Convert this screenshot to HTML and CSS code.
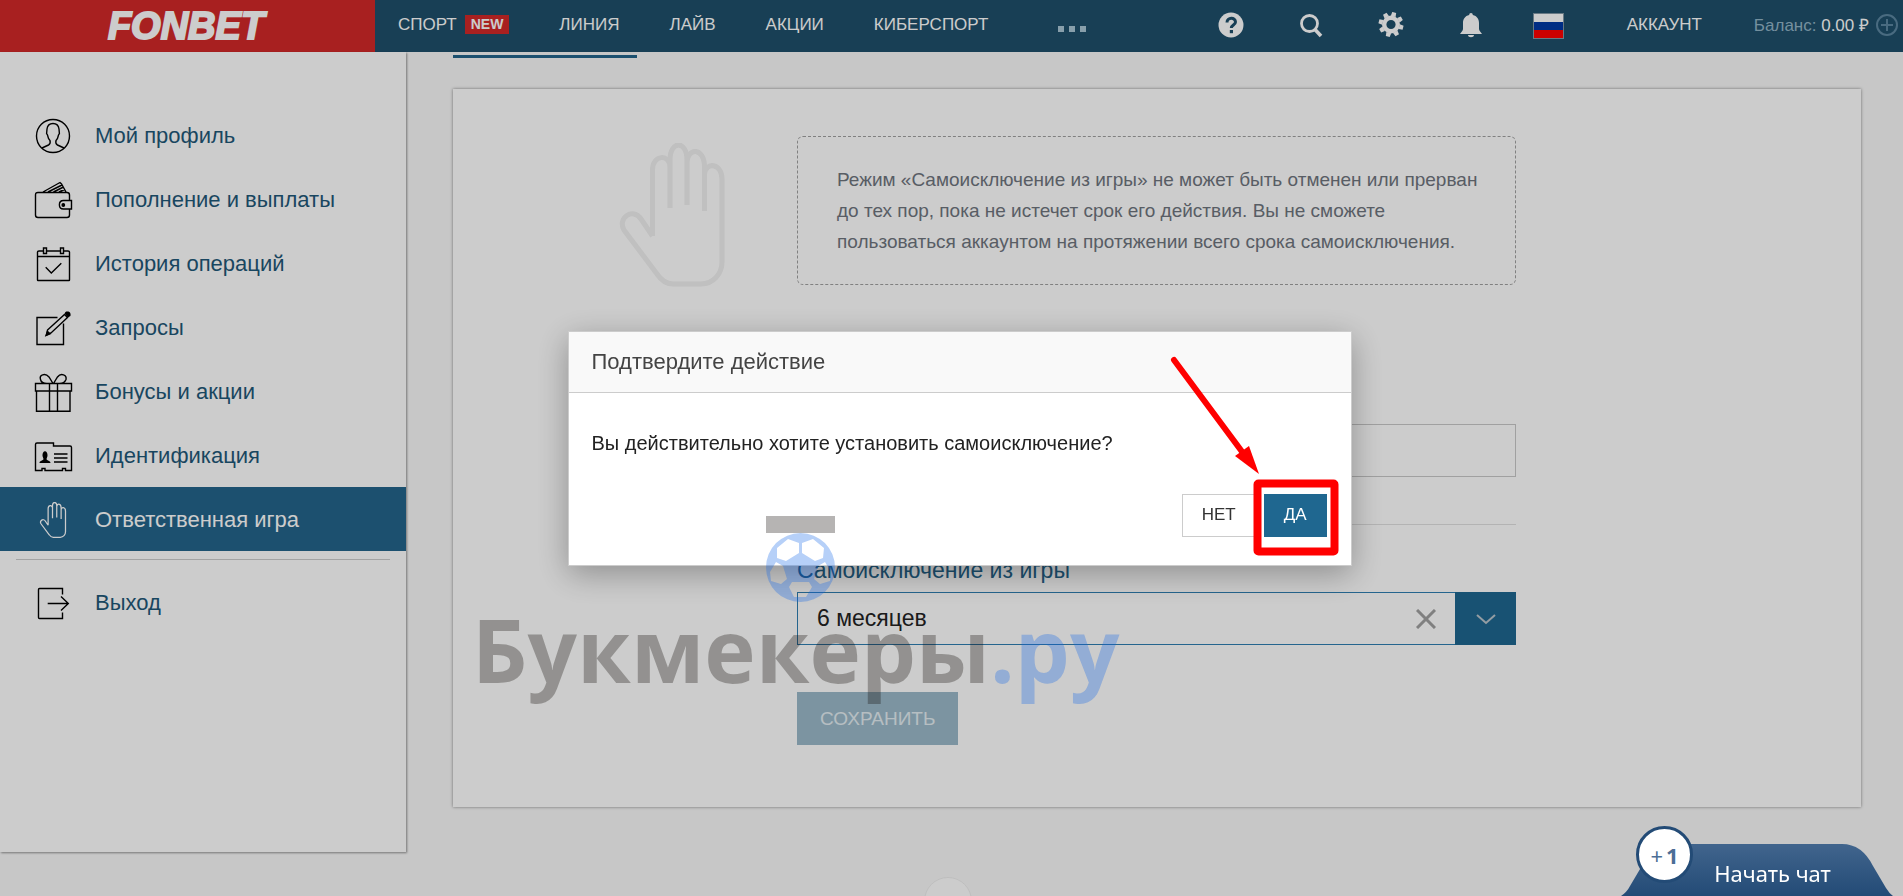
FILE: index.html
```html
<!DOCTYPE html>
<html lang="ru">
<head>
<meta charset="utf-8">
<title>Fonbet — Ответственная игра</title>
<link rel="stylesheet" href="styles.css">
</head>
<body>
<svg class="defs" aria-hidden="true">
  <symbol id="hand" viewBox="0 0 106 144">
    <path d="M33.500 93V27C33.500 11 51 11 51 24V65V17C51-3 68-3 68 17V62V20C68 4 85.500 4 85.500 24V68V32C86 18 103 20 103 36V119C103 131 94 141 82 141H54C47 141 42 137 38 131L5 87C-2 75 14 64 22 76L33.500 93"/>
  </symbol>
</svg>

<header class="topbar">
  <a class="logo" href="#">FONBET</a>
  <nav class="nav">
    <a href="#">СПОРТ<span class="new">NEW</span></a>
    <a href="#">ЛИНИЯ</a>
    <a href="#">ЛАЙВ</a>
    <a href="#">АКЦИИ</a>
    <a href="#">КИБЕРСПОРТ</a>
    <button class="more" aria-label="Ещё"><i></i><i></i><i></i></button>
  </nav>
  <div class="tools">
    <button class="tool" aria-label="Помощь"><svg viewBox="0 0 26 26"><circle cx="13" cy="13" r="12.500" fill="#fff"/><path d="M9 10.500C9 5 17.500 5 17.500 10C17.500 13 13.300 13 13.300 16" fill="none" stroke="#1e4f6b" stroke-width="3"/><rect x="11.800" y="18" width="3.200" height="3.200" fill="#1e4f6b"/></svg></button>
    <button class="tool" aria-label="Поиск"><svg viewBox="0 0 26 26"><circle cx="11.500" cy="11.500" r="8" fill="none" stroke="#fff" stroke-width="2.800"/><path d="M17 17.500L23 24" stroke="#fff" stroke-width="3.600"/></svg></button>
    <button class="tool" aria-label="Настройки"><svg viewBox="0 0 26 26"><circle cx="13" cy="12.500" r="6.800" fill="none" stroke="#fff" stroke-width="4.400"/><g fill="#fff" transform="rotate(15 13 12.500)"><path id="tooth" d="M10.500 4L11 0H15L15.500 4Z"/><use href="#tooth" transform="rotate(45 13 12.500)"/><use href="#tooth" transform="rotate(90 13 12.500)"/><use href="#tooth" transform="rotate(135 13 12.500)"/><use href="#tooth" transform="rotate(180 13 12.500)"/><use href="#tooth" transform="rotate(225 13 12.500)"/><use href="#tooth" transform="rotate(270 13 12.500)"/><use href="#tooth" transform="rotate(315 13 12.500)"/></g></svg></button>
    <button class="tool" aria-label="Уведомления"><svg viewBox="0 0 26 26"><path d="M13 1C14.200 1 14.800 1.800 14.800 3C19 4 21 7 21 11V17C21 19 23 20 24 22H2C3 20 5 19 5 17V11C5 7 7 4 11.200 3C11.200 1.800 11.800 1 13 1ZM10 23H16C16 26 10 26 10 23Z" fill="#fff"/></svg></button>
    <button class="tool language" aria-label="Язык: русский"><span class="flag"><i></i><i></i><i></i></span></button>
    <a class="account" href="#">АККАУНТ</a>
    <a class="balance" href="#"><span>Баланс: <b>0.00 ₽</b></span><svg viewBox="0 0 22 22"><circle cx="11" cy="11" r="10"/><path d="M5 11H17M11 5V17"/></svg></a>
  </div>
</header>

<div class="page">
  <aside class="sidebar">
    <a class="item" href="#"><svg class="icon" viewBox="0 0 40 40"><circle cx="20" cy="20" r="16.500"/><path d="M9 32L15.500 29C17.500 28 17.500 26.500 17 24.500L15.500 22.500L14.500 19L13.600 17.500L14 13C14.500 9 17 7.500 20 7.500S25.500 9 26 13L26.400 17.500L25.500 19L24.500 22.500L23 24.500C22.500 26.500 22.500 28 24.500 29L31 32"/></svg>Мой профиль</a>
    <a class="item" href="#"><svg class="icon" viewBox="0 0 40 40"><path d="M36.500 20.500V15Q36.500 12.500 34 12.500H5Q2.500 12.500 2.500 15V35Q2.500 37.500 5 37.500H34Q36.500 37.500 36.500 35V29M38.500 20.500V29H30.500C25 29 25 20.500 30.500 20.500ZM10 12L27 2.500L28.500 4L33 12M15 12L29 5M20.500 12L30.500 7M26 12L31.500 9.500"/><circle cx="30.300" cy="25" r="1.200" fill="#000"/></svg>Пополнение и выплаты</a>
    <a class="item" href="#"><svg class="icon" viewBox="0 0 40 40"><path d="M10.500 7H6Q4.500 7 4.500 8V36Q4.500 36.500 5 36.500H36Q36.500 36.500 36.500 36V8Q36.500 7 35 7H30.500M13.500 7H27.500M4.500 12.500H36.500M10.500 4H13.500V9.500H10.500ZM27.500 4H30.500V9.500H27.500ZM12.700 23.300L18.300 29L28.300 19.300"/></svg>История операций</a>
    <a class="item" href="#"><svg class="icon" viewBox="0 0 40 40"><path d="M24.500 9.500H4V36.500H30.500V15.500M14.500 22L31.500 6.500L34.500 9.500L18 25L13.500 27Z"/><path d="M13 27.500L14.500 23.500L17 25.800ZM32.500 5.500C33 3 37.500 4 36.800 7.500L35 8.500Z" fill="#000"/></svg>Запросы</a>
    <a class="item" href="#"><svg class="icon" viewBox="0 0 40 40"><path d="M2.500 11.500H38.500V19H2.500ZM3.500 19V39.300H37V19M16.500 11.500V39.300M24.500 11.500V39.300M20 11.500L16 5C12 .5 6 3 7.500 7.500C8 10 11 11.500 14 11.500M20.500 11.500L24.500 5C28 .5 34 3 33 7.500C32 10 30 11.500 26.500 11.500"/></svg>Бонусы и акции</a>
    <a class="item" href="#"><svg class="icon" viewBox="0 0 40 40"><path d="M4 7H20.500V10H37Q38.500 10 38.500 11.500V34.500H32.500V32.500H29.500V34.500H12V32.500H9V34.500H2.500V8.500Q2.500 7 4 7ZM21 18H34.500M21 22H34.500M21 26H34.500"/><path d="M6.500 27C6.500 24.500 10 25 10.500 23L9.500 20C9 13.500 15 13.500 14.500 20L13.500 23C14 25 17.500 24.500 17.500 27Z" fill="#000" stroke="none"/></svg>Идентификация</a>
    <a class="item active" href="#"><svg class="icon hand"><use href="#hand"/></svg>Ответственная игра</a>
    <hr class="rule">
    <a class="item" href="#"><svg class="icon" viewBox="0 0 40 40"><path d="M29.500 11.500V5.500H6.500Q5.500 5.500 5.500 6.500V34.500Q5.500 35.500 6.500 35.500H29.500V29.500M14.700 20.500H35.500M28 13.500L35.300 20.500L28 27.500"/></svg>Выход</a>
  </aside>

  <main class="main">
    <div class="tab"></div>
    <section class="card">
      <svg class="bighand"><use href="#hand"/></svg>
      <form class="form">
        <p class="notice">Режим «Самоисключение из игры» не может быть отменен или прерван до тех пор, пока не истечет срок его действия. Вы не сможете пользоваться аккаунтом на протяжении всего срока самоисключения.</p>
        <input class="text" type="text" aria-label="Ограничение">
        <hr class="split">
        <label class="label" for="period">Самоисключение из игры</label>
        <div class="combo">
          <input id="period" type="text" value="6 месяцев">
          <button class="clear" type="button" aria-label="Очистить"><svg viewBox="0 0 20 20"><path d="M1 1L19 19M19 1L1 19"/></svg></button>
          <button class="open" type="button" aria-label="Открыть список"><svg viewBox="0 0 20 12"><path d="M1 2L10 10L19 2"/></svg></button>
        </div>
        <button class="save" type="button">СОХРАНИТЬ</button>
      </form>
    </section>
  </main>
</div>
<button class="totop" aria-label="Наверх"></button>

<div class="overlay">
  <div class="modal" role="dialog" aria-labelledby="dlg-title">
    <h2 class="modal-title" id="dlg-title">Подтвердите действие</h2>
    <p class="modal-text">Вы действительно хотите установить самоисключение?</p>
    <div class="actions">
      <button class="btn">НЕТ</button>
      <button class="btn primary">ДА</button>
    </div>
    <svg class="pointer" viewBox="0 0 180 210" aria-hidden="true">
      <path d="M11 11L80 104" stroke="#f00" stroke-width="6" stroke-linecap="round"/>
      <path d="M96 125L72 107L86 97Z" fill="#f00"/>
      <rect x="94.500" y="134.500" width="77" height="68" rx="1" fill="none" stroke="#f00" stroke-width="8" stroke-linejoin="round"/>
    </svg>
  </div>
</div>

<div class="watermark" aria-hidden="true">
  <svg class="ball" viewBox="0 0 70 105">
    <rect width="69" height="17" fill="#140f0a"/>
    <path fill="#1467e8" fill-rule="evenodd" d="M0 51.500A34.500 34.500 0 1 1 69 51.500A34.500 34.500 0 1 1 0 51.500ZM11 32L22 23L33 27V37L20 45L11 42ZM36 27L47 23L58 32L57 42L49 45L36 37ZM10 46L17 50L21 63L15 68L5 65L4 56ZM59 46L65 56L64 65L54 68L48 63L52 50ZM26 66H43L46 71L40 81L28 81L23 71Z"/>
  </svg>
  <p class="wordmark">Букмекеры<span>.ру</span></p>
</div>

<button class="chat">
  <svg viewBox="0 0 272 52" preserveAspectRatio="none" aria-hidden="true"><defs><linearGradient id="g" x2="0" y2="1"><stop stop-color="#41658d"/><stop offset="1" stop-color="#234b76"/></linearGradient></defs><path d="M0 52Q6 48 9 42L22 20Q34 0 55 0H221Q241 0 252 22L265 44Q268 49 272 52Z" fill="url(#g)"/></svg>
  <span class="chat-label">Начать чат</span>
  <span class="count">+<b>1</b></span>
</button>
</body>
</html>
```
FILE: styles.css
```css
* { box-sizing: border-box; }
body {
  margin: 0;
  min-height: 100vh;
  overflow: hidden;
  background: #f9f9f9;
  font-family: "Liberation Sans", Arial, sans-serif;
  color: #222;
}
a { color: inherit; text-decoration: none; }
button { font: inherit; border: 0; padding: 0; background: none; cursor: pointer; }
.defs { position: absolute; width: 0; height: 0; }

.topbar { display: flex; height: 52px; background: #1e4f6b; color: #fff; font-size: 17px; }
.logo {
  width: 375px;
  flex: none;
  padding-right: 3px;
  background: #d32929;
  display: flex;
  align-items: center;
  justify-content: center;
  font-size: 38px;
  font-weight: bold;
  font-style: italic;
  -webkit-text-stroke: 2px #fff;
}
.nav { display: flex; align-items: center; gap: 50px; padding: 0 0 3px 23px; }
.nav a { display: flex; align-items: center; gap: 8px; }
.new { background: #d32929; font-size: 14px; font-weight: bold; line-height: 19px; padding: 0 6px; }
.more { display: flex; gap: 5px; margin: 8px 0 0 20px; }
.more i { width: 6px; height: 6px; background: #abc7d6; }
.tools { display: flex; align-items: center; margin-left: auto; padding: 0 5px 3px 0; }
.tool { width: 80px; height: 30px; display: flex; align-items: center; justify-content: center; }
.tool svg { width: 26px; height: 26px; }
.language { padding-right: 5px; }
.flag { display: block; border: 1px solid #8298a6; margin-top: 2px; }
.flag i { display: block; width: 29px; height: 8px; background: #fff; }
.flag i:nth-child(2) { background: #0039a6; }
.flag i:nth-child(3) { background: #f00; }
.account { margin: 0 52px 0 36px; }
.balance { display: flex; align-items: center; gap: 7px; color: #92b4c6; white-space: nowrap; }
.balance b { font-weight: normal; color: #fff; }
.balance svg { width: 22px; height: 22px; fill: none; stroke: #5c86a0; stroke-width: 2; }

.page { display: flex; align-items: flex-start; }
.sidebar {
  width: 406px;
  flex: none;
  padding: 51px 0 218px;
  background: #fff;
  box-shadow: 1px 1px 2px rgba(0, 0, 0, .4);
}
.item { display: flex; align-items: center; height: 64px; padding: 2px 0 0 33px; gap: 22px; font-size: 22px; color: #1f5878; }
.icon { width: 40px; height: 40px; fill: none; stroke: #000; stroke-width: 1.400; }
.icon.hand { height: 36px; stroke: #fff; stroke-width: 5; }
.active { background: #24648b; color: #fff; }
.rule { height: 1px; margin: 8px 16px 10px; border: 0; background: #ccc; }

.main { flex: 1; min-width: 0; padding: 3px 42px 0 47px; }
.tab { width: 184px; height: 3px; background: #24648b; margin-bottom: 31px; }
.card {
  display: grid;
  grid-template-columns: 344px minmax(0, 719px);
  padding: 47px 0 62px;
  background: #fff;
  box-shadow: 0 0 3px rgba(0, 0, 0, .45);
}
.bighand { width: 106px; height: 144px; margin: 7px 0 0 166px; fill: none; stroke: #f0f0f0; stroke-width: 5; }
.form { display: flex; flex-direction: column; }
.notice {
  margin: 0;
  padding: 27px 32px 27px 39px;
  border: 1px dashed #a0a0a0;
  border-radius: 6px;
  font-size: 19px;
  line-height: 31px;
  color: #6f757e;
}
.text { height: 53px; margin-top: 139px; border: 1px solid #c8c8c8; background: #fff; }
.split { width: 100%; height: 1px; margin: 47px 0 32px; border: 0; background: #e0e0e0; }
.label { font-size: 23px; line-height: 26px; margin-bottom: 9px; color: #24648b; }
.combo { display: flex; height: 53px; border: 1px solid #2f7fb2; }
.combo input { flex: 1; min-width: 0; border: 0; padding: 0 19px; background: none; font: inherit; font-size: 23px; color: #222; }
.clear { width: 60px; display: grid; place-items: center; }
.clear svg { width: 20px; height: 20px; fill: none; stroke: #a0a0a0; stroke-width: 3; }
.open { width: 61px; margin: -1px; display: grid; place-items: center; background: #1f6790; }
.open svg { width: 20px; height: 12px; fill: none; stroke: #b9c5cc; stroke-width: 2; }
.save { align-self: flex-start; height: 53px; margin-top: 47px; padding: 0 23px; background: #9bbaca; color: #e4eef3; font-size: 19px; }
.totop {
  position: fixed;
  left: calc(50% - 28px);
  bottom: -29px;
  width: 48px;
  height: 48px;
  border: 1px solid #eee;
  border-radius: 50%;
  background: #fff;
}

.overlay {
  position: fixed;
  inset: 0;
  display: flex;
  align-items: center;
  justify-content: center;
  padding-left: 16px;
  background: rgba(0, 0, 0, .2);
}
.modal { position: relative; width: 784px; background: #fff; border: 1px solid #ccc; box-shadow: 0 8px 30px rgba(0, 0, 0, .3); }
.modal-title { margin: 0; padding: 0 23px; border-bottom: 1px solid #ccc; background: #f9f9f9; font-size: 22px; font-weight: normal; line-height: 60px; color: #444; }
.modal-text { margin: 36px 23px 0; font-size: 20px; line-height: 28px; }
.actions { display: flex; justify-content: flex-end; gap: 8px; padding: 37px 24px 28px; }
.btn { height: 43px; padding: 0 19px; border: 1px solid #ccc; background: #fff; font-size: 17px; color: #333; }
.primary { border-color: #1f6790; background: #1f6790; color: #fff; }
.pointer { position: absolute; right: 8px; bottom: 6px; width: 180px; height: 210px; fill: none; }

.watermark { position: absolute; top: 516px; left: 472px; opacity: .31; pointer-events: none; }
.ball { display: block; width: 70px; height: 105px; margin-left: 294px; }
.wordmark { margin: -22px 0 0; font: bold 87px/100px "Open Sans", "Noto Sans", sans-serif; color: #140f0a; }
.wordmark span { color: #1467e8; }

.chat { position: fixed; right: 10px; bottom: 0; width: 272px; height: 52px; color: #fff; font-family: "Noto Sans", sans-serif; }
.chat > svg { position: absolute; inset: 0; width: 100%; height: 100%; }
.chat-label { position: relative; display: block; padding: 5px 0 0 31px; font-size: 22px; line-height: 30px; }
.count {
  position: absolute;
  left: 15px;
  bottom: 13px;
  width: 57px;
  height: 57px;
  display: flex;
  align-items: center;
  justify-content: center;
  gap: 3px;
  border: 3px solid #234b76;
  border-radius: 50%;
  background: #fff;
  color: #4c6e96;
  font-size: 22px;
}
```
